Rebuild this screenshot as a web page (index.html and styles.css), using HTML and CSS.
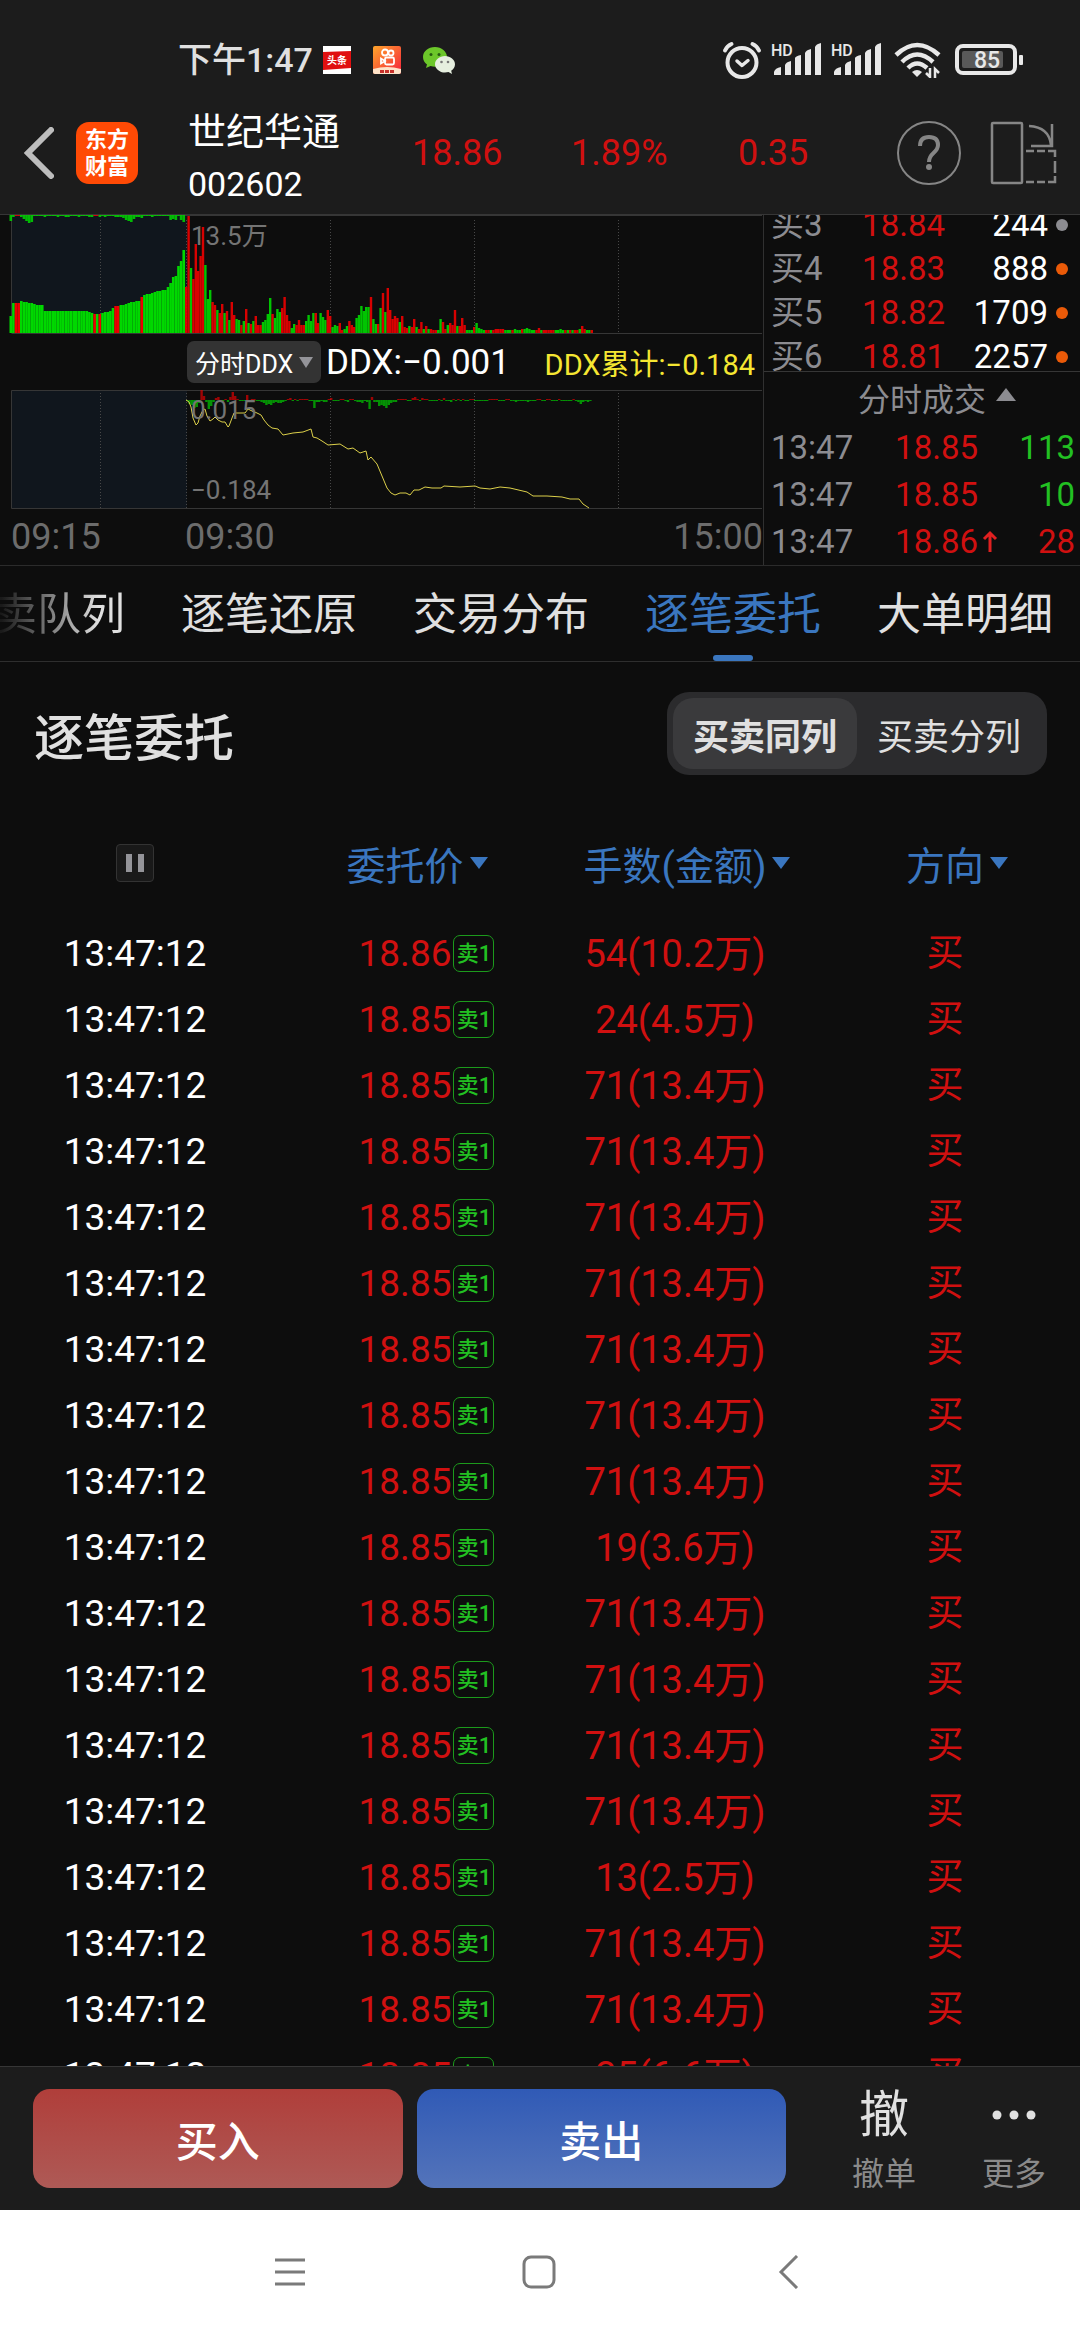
FILE: index.html
```html
<!DOCTYPE html>
<html lang="zh-CN">
<head>
<meta charset="utf-8">
<meta name="viewport" content="width=device-width">
<title>世纪华通 002602</title>
<link rel="stylesheet" href="styles.css">
</head>

<body>

<div class="status">
	<span class="clock">下午1:47</span>
	<svg class="app" width="28" height="28" viewBox="0 0 28 28">
		<rect width="28" height="28" fill="#fff"/>
		<path d="M0 6 L28 5 V22 L0 24 Z" fill="#e01010"/>
		<text x="14" y="18" text-anchor="middle" class="tiny">头条</text>
	</svg>
	<svg class="app" width="28" height="28" viewBox="0 0 28 28">
		<defs><linearGradient id="ks" x1="0" y1="0" x2="1" y2="1"><stop offset="0" stop-color="#ffa62b"/><stop offset="1" stop-color="#f5203c"/></linearGradient></defs>
		<rect width="28" height="28" rx="2" fill="url(#ks)"/>
		<path d="M0 23 Q14 19 28 23 V26 Q28 28 26 28 H2 Q0 28 0 26 Z" fill="#ffe3c8"/>
		<path d="M7 25.500h15" stroke="#c8322c" stroke-width="3" stroke-dasharray="4 1"/>
		<g fill="none" stroke="#fff" stroke-width="1.800"><circle cx="12" cy="6.500" r="3"/><circle cx="18" cy="7" r="2.500"/><rect x="12" y="11.500" width="9" height="7" rx="1.500"/><path d="M12 15l-4-2.500v5z"/></g>
	</svg>
	<svg class="app" width="32" height="28" viewBox="0 0 32 28">
		<path d="M12 1C5 1 0 5.500 0 11c0 3 1.500 5.500 4 7.500L3 22l4.500-2c1.500.500 3 .700 4.500.700 6.500 0 12-4.300 12-9.700S18.500 1 12 1z" fill="#6cc72a"/>
		<circle cx="8" cy="8.500" r="1.500" fill="#265c10"/><circle cx="16" cy="8.500" r="1.500" fill="#265c10"/>
		<path d="M22 10c-5.500 0-10 3.700-10 8.200s4.500 8.300 10 8.300c1.300 0 2.500-.200 3.500-.500L29 28l-.800-3.200c2.300-1.500 3.800-3.900 3.800-6.600C32 13.700 27.500 10 22 10z" fill="#e6efdf"/>
		<circle cx="18.500" cy="16" r="1.300" fill="#777"/><circle cx="25" cy="16" r="1.300" fill="#777"/>
	</svg>

	<div class="system">
		<svg width="40" height="38" viewBox="0 0 40 38" fill="none" stroke="#e8e8e8" stroke-linecap="round" stroke-linejoin="round">
			<circle cx="20" cy="21.500" r="14.500" stroke-width="4"/>
			<path d="M15 20l5 4.500 6-5" stroke-width="3.500"/>
			<path d="M3 9.500Q5 5 9.500 3M37 9.500Q35 5 30.500 3" stroke-width="4"/>
		</svg>
		<svg class="signal" width="50" height="34" viewBox="0 0 50 34"><use href="#bars"/></svg>
		<svg class="signal" width="50" height="34" viewBox="0 0 50 34">
			<g id="bars" fill="#e8e8e8">
				<text x="-1" y="13" class="hd">HD</text>
				<path d="M2 32v-3q1-4 7-5v8zM13 32V22q1-3 6-4v14zM23 32V15q1-2 6-3v20zM33 32V10q1-3 6-4v26zM43 32V4q1-3 6-4v32z"/>
			</g>
		</svg>
		<svg class="wifi" width="47" height="36" viewBox="0 0 47 36" fill="none" stroke="#e8e8e8" stroke-width="4.500">
			<path d="M2 13Q23 -7 45 13M8 20Q23 5 39 20M14 26Q23 17 33 26"/>
			<path d="M18 30q5-4 10 0l-5 5z" fill="#e8e8e8" stroke="none"/>
			<path d="M36 26v9l-4-4M41 36v-9l4 4" stroke-width="2.500"/>
		</svg>
		<svg width="69" height="32" viewBox="0 0 69 32">
			<rect x="2" y="2" width="58" height="27" rx="6" fill="none" stroke="#e8e8e8" stroke-width="4"/>
			<rect x="7" y="7" width="41" height="17" rx="2" fill="#595959"/>
			<rect x="64" y="11" width="4" height="10" rx="1" fill="#e8e8e8"/>
			<text x="32" y="24" text-anchor="middle" class="level">85</text>
		</svg>
	</div>
</div>

<header class="stock">
	<button class="back" aria-label="返回">
		<svg width="32" height="52" viewBox="0 0 32 52"><path d="M29 3L6 26l23 23" fill="none" stroke="#bdbdbd" stroke-width="6" stroke-linecap="round"/></svg>
	</button>
	<div class="logo">东方<br>财富</div>
	<div class="name"><h1>世纪华通</h1><span>002602</span></div>
	<span class="quote price">18.86</span>
	<span class="quote percent">1.89%</span>
	<span class="quote change">0.35</span>
	<button class="help" aria-label="帮助">
		<svg width="66" height="66" viewBox="0 0 66 66" fill="none" stroke="#868686">
			<circle cx="33" cy="33" r="31" stroke-width="2"/>
			<path d="M24 26q0-9 9-9t9 8q0 4-4.500 8T33 42" stroke-width="4"/>
			<circle cx="33" cy="47" r="3" fill="#868686" stroke="none"/>
		</svg>
	</button>
	<button class="rotate" aria-label="横屏">
		<svg width="68" height="66" viewBox="0 0 68 66" fill="none" stroke="#868686" stroke-width="2.500">
			<rect x="2" y="3" width="30" height="60" rx="1"/>
			<path d="M39 6q20 1 22 19M62 4v22H41"/>
			<path d="M36 31h8M47 31h8M58 31h7v6M65 41v12M65 56v6h-7M55 62h-8M44 62h-8"/>
		</svg>
	</button>
</header>

<section class="market">
	<div class="charts">
		<div class="chart">
			<svg id="volume" viewBox="0 0 763 119" preserveAspectRatio="none">
				<rect x="12" y="0" width="175" height="118" fill="#10161d"/>
				<g class="grid"><path d="M100.500 5V118M186.500 5V118M330.500 5V118M474.500 5V118M618.500 5V118"/></g>
				<path class="frame" d="M11.500 118V0.500H762M11.500 118.500H762"/>
			</svg>
			<span class="mark top">13.5万</span>
		</div>
		<div class="toolbar">
			<button class="indicator">分时DDX <i></i></button>
			<span class="ddx">DDX:−0.001</span>
			<span class="total">DDX累计:−0.184</span>
		</div>
		<div class="chart">
			<svg id="ddx" viewBox="0 0 763 119" preserveAspectRatio="none">
				<rect x="12" y="0" width="175" height="118" fill="#10161d"/>
				<g class="grid"><path d="M100.500 3V118M186.500 3V118M330.500 3V118M474.500 3V118M618.500 3V118"/></g>
				<path class="frame" d="M762 0.500H11.500V118.500H762"/>
				<polyline class="line" points="186,10 189,12 191,17 193,28 196,35 198,33 200,26 203,20 205,19 207,26 210,31 213,29 215,27 218,30 222,32 225,32 228,37 229,36 232,28 234,23 245,23 248,19 252,21 257,23 261,25 264,30 268,35 272,38 278,39 283,45 293,43 303,42 311,39 313,47 317,48 322,51 328,55 340,54 348,59 353,58 360,63 366,61 368,70 371,67 377,74 382,86 387,98 391,103 395,105 400,103 406,103 410,105 414,100 419,100 425,97 432,98 441,98 444,96 460,97 475,96 480,98 490,99 500,97 510,98 527,102 533,106 547,106 562,107 570,109 579,109 583,114 589,118"/>
			</svg>
			<span class="mark middle">0.015</span>
			<span class="mark bottom">−0.184</span>
		</div>
		<div class="axis"><span>09:15</span><span>09:30</span><span>15:00</span></div>
	</div>

	<aside class="side">
		<div class="depth">
			<table>
				<colgroup><col class="d1"><col class="d2"><col class="d3"><col class="d4"></colgroup>
				<tr><td>买3</td><td class="up">18.84</td><td class="qty">244</td><td><i class="dot gray"></i></td></tr>
				<tr><td>买4</td><td class="up">18.83</td><td class="qty">888</td><td><i class="dot"></i></td></tr>
				<tr><td>买5</td><td class="up">18.82</td><td class="qty">1709</td><td><i class="dot"></i></td></tr>
				<tr><td>买6</td><td class="up">18.81</td><td class="qty">2257</td><td><i class="dot"></i></td></tr>
			</table>
		</div>
		<button class="expand">分时成交<i></i></button>
		<table class="trades">
			<colgroup><col class="t1"><col class="t2"><col class="t3"><col class="t4"></colgroup>
			<tr><td>13:47</td><td class="up">18.85</td><td></td><td class="down">113</td></tr>
			<tr><td>13:47</td><td class="up">18.85</td><td></td><td class="down">10</td></tr>
			<tr><td>13:47</td><td class="up">18.86</td><td><svg width="16" height="24" viewBox="0 0 16 24"><path d="M8 22V3M2 9l6-6 6 6" fill="none" stroke="#e02020" stroke-width="3"/></svg></td><td class="up">28</td></tr>
		</table>
	</aside>
</section>

<nav class="tabs">
	<a href="#queue">买卖队列</a>
	<a href="#restore">逐笔还原</a>
	<a href="#spread">交易分布</a>
	<a href="#orders" class="active">逐笔委托</a>
	<a href="#large">大单明细</a>
</nav>

<main id="orders">
	<div class="heading">
		<h2>逐笔委托</h2>
		<div class="switch">
			<button class="on">买卖同列</button>
			<button>买卖分列</button>
		</div>
	</div>
	<table class="list">
		<thead>
			<tr>
				<th><button class="pause" aria-label="暂停"><i></i><i></i></button></th>
				<th><button class="sort">委托价</button></th>
				<th><button class="sort">手数(金额)</button></th>
				<th><button class="sort">方向</button></th>
			</tr>
		</thead>
		<tbody id="rows"></tbody>
	</table>
</main>

<footer class="actions">
	<button class="buy">买入</button>
	<button class="sell">卖出</button>
	<button class="tool"><b>撤</b><span>撤单</span></button>
	<button class="tool"><b><svg width="44" height="10" viewBox="0 0 44 10" fill="#e0e0e0"><circle cx="5" cy="5" r="4.500"/><circle cx="22" cy="5" r="4.500"/><circle cx="39" cy="5" r="4.500"/></svg></b><span>更多</span></button>
</footer>

<div class="system-nav">
	<button aria-label="菜单"><svg width="34" height="34" viewBox="0 0 34 34"><path d="M2 5h30M2 17h30M2 29h30"/></svg></button>
	<button aria-label="主页"><svg width="34" height="34" viewBox="0 0 34 34"><rect x="2" y="2" width="30" height="30" rx="7"/></svg></button>
	<button aria-label="返回"><svg width="34" height="34" viewBox="0 0 34 34"><path d="M26 1L10 17l16 16"/></svg></button>
</div>

<script src="script.js"></script>
</body>
</html>
```
FILE: styles.css
```css
* {
	box-sizing: border-box;
}

body {
	margin: 0;
	height: 100vh;
	display: flex;
	flex-direction: column;
	overflow: hidden;
	background: #0d0d0d;
	color: #e0e0e0;
	font-family: Roboto, "Noto Sans CJK SC", sans-serif;
}

button {
	margin: 0;
	padding: 0;
	border: 0;
	background: none;
	color: inherit;
	font: inherit;
}

svg {
	display: block;
	flex: none;
}

table {
	width: 100%;
	border-collapse: collapse;
	table-layout: fixed;
}

td, th {
	padding: 0;
}

/* Phone status bar */
.status {
	flex: none;
	display: flex;
	align-items: center;
	height: 92px;
	padding: 28px 56px 0 178px;
	background: #1c1c1c;
}

.clock {
	font-size: 34px;
	font-weight: 500;
	line-height: 40px;
	margin-right: 10px;
}

.app {
	margin-right: 22px;
}

.tiny {
	font-size: 10px;
	font-weight: bold;
	fill: white;
}

.system {
	display: flex;
	align-items: center;
	gap: 10px;
	margin-left: auto;
}

.signal {
	overflow: visible;
}

.hd {
	font-size: 16px;
	font-weight: 500;
}

.wifi {
	margin: 0 4px 0 2px;
}

.level {
	font-size: 23px;
	font-weight: 500;
	fill: #e8e8e8;
}

/* Stock header */
.stock {
	flex: none;
	display: flex;
	align-items: center;
	height: 123px;
	padding: 0 22px;
	background: #1c1c1c;
	border-bottom: 1px solid #363636;
}

.logo {
	width: 62px;
	height: 62px;
	margin-left: 22px;
	padding-top: 4px;
	border-radius: 13px;
	background: #ff4a05;
	color: white;
	font-size: 22px;
	font-weight: bold;
	line-height: 27px;
	text-align: center;
}

.name {
	width: 224px;
	margin-left: 50px;
	padding-top: 10px;
	color: white;
	font-size: 34px;
	line-height: 52px;
}

.name h1 {
	margin: 0;
	font-size: 38px;
	font-weight: normal;
	line-height: 52px;
}

.name span {
	display: block;
}

.quote {
	color: #d01010;
	font-size: 36px;
}

.price {
	width: 159px;
}

.percent {
	width: 167px;
}

.help {
	margin-left: auto;
}

.rotate {
	margin-left: 28px;
}

/* Charts */
.market {
	flex: none;
	display: flex;
	border-bottom: 1px solid #2b2b2b;
}

.charts {
	flex: 1;
}

.chart {
	position: relative;
}

.chart svg {
	width: 100%;
	height: 119px;
}

.grid {
	stroke: #484848;
	stroke-dasharray: 1 2;
}

.frame {
	fill: none;
	stroke: #363636;
}

.line {
	fill: none;
	stroke: #dcd04a;
}

.mark {
	position: absolute;
	left: 191px;
	color: #747474;
	font-size: 26px;
	line-height: 30px;
}

.top {
	top: 6px;
}

.middle {
	top: 5px;
}

.bottom {
	bottom: 4px;
}

.toolbar {
	display: flex;
	align-items: center;
	height: 56px;
	padding: 0 8px 0 187px;
	white-space: nowrap;
}

.indicator {
	display: flex;
	align-items: center;
	justify-content: space-between;
	width: 134px;
	height: 42px;
	padding: 0 8px;
	border-radius: 7px;
	background: #333;
	color: white;
	font-size: 25px;
}

.indicator i {
	border: 7px solid transparent;
	border-top: 11px solid #949499;
	border-bottom: 0;
}

.ddx {
	margin-left: 5px;
	color: white;
	font-size: 35px;
}

.total {
	margin-left: auto;
	color: #f5e632;
	font-size: 29px;
}

.axis {
	display: flex;
	height: 55px;
	padding-left: 11px;
	color: #6c6c6c;
	font-size: 36px;
	line-height: 56px;
}

.axis span {
	width: 174px;
}

.axis span:last-child {
	width: auto;
	margin-left: auto;
}

/* Order book and latest trades */
.side {
	width: 317px;
	border-left: 1px solid #303030;
	color: #8c8c91;
	font-size: 33px;
}

.depth {
	height: 157px;
	overflow: hidden;
	border-bottom: 1px solid #363636;
}

.depth table {
	margin-top: -12px;
}

.depth tr {
	height: 44px;
	line-height: 44px;
}

.depth td:first-child, .trades td:first-child {
	padding-left: 7px;
	text-align: left;
}

.depth td, .trades td {
	text-align: right;
}

.d1 {
	width: 80px;
}

.d2 {
	width: 101px;
}

.d3 {
	width: 103px;
}

.qty {
	color: white;
}

.up {
	color: #d01010;
}

.down {
	color: #22c022;
}

.dot {
	display: block;
	width: 12px;
	height: 12px;
	margin-left: 8px;
	border-radius: 50%;
	background: #ea5a08;
}

.gray {
	background: #8c8c91;
}

.expand {
	display: flex;
	align-items: center;
	justify-content: center;
	gap: 10px;
	width: 100%;
	height: 52px;
	padding-bottom: 2px;
	padding-left: 54px;
	padding-right: 24px;
	font-size: 32px;
}

.expand i {
	border: 10px solid transparent;
	border-bottom: 13px solid #8c8c91;
	border-top: 0;
	margin-bottom: 6px;
}

.trades tr {
	height: 47px;
	line-height: 47px;
}

.t1 {
	width: 100px;
}

.t2 {
	width: 114px;
}

.t3 {
	width: 22px;
}

.trades svg {
	margin-left: 4px;
}

.trades td:last-child {
	padding-right: 5px;
}

/* Section tabs, scrolled to the right */
.tabs {
	flex: none;
	display: flex;
	justify-content: flex-end;
	gap: 56px;
	height: 96px;
	padding-right: 27px;
	overflow: hidden;
	border-bottom: 1px solid #2e2e2e;
	font-size: 44px;
	line-height: 98px;
	white-space: nowrap;
}

.tabs a {
	position: relative;
	color: #e0e0e0;
	text-decoration: none;
}

.tabs a:first-child {
	background: linear-gradient(to right, #1a1a1a 30%, #e0e0e0 85%);
	background-clip: text;
	-webkit-background-clip: text;
	color: transparent;
}

.tabs .active {
	color: #3a76bf;
}

.active::after {
	content: "";
	position: absolute;
	left: 50%;
	bottom: 0;
	width: 40px;
	height: 6px;
	margin-left: -20px;
	border-radius: 3px;
	background: #3a76bf;
}

/* Order list */
main {
	flex: 1;
	min-height: 0;
	overflow: hidden;
}

.heading {
	display: flex;
	align-items: center;
	justify-content: space-between;
	height: 143px;
	padding: 0 33px 0 34px;
}

.heading h2 {
	margin: 0;
	font-size: 50px;
	font-weight: 500;
}

.switch {
	display: flex;
	padding: 6px;
	border-radius: 22px;
	background: #2b2b2d;
	font-size: 36px;
}

.switch button {
	width: 184px;
	height: 71px;
	border-radius: 20px;
}

.switch .on {
	background: #3a3a3c;
	font-weight: bold;
}

.list {
	font-size: 37px;
	text-align: center;
	color: #d01010;
}

.list thead tr {
	height: 116px;
}

.list th {
	font-weight: normal;
	color: #3a76bf;
}

.list tbody tr {
	height: 66px;
	line-height: 66px;
}

.list td:first-child {
	color: white;
}

.list td:nth-child(3) {
	font-size: 38px;
}

.pause {
	display: flex;
	align-items: center;
	justify-content: center;
	gap: 6px;
	width: 38px;
	height: 38px;
	margin: 0 auto;
	border: 1px solid #333;
	border-radius: 4px;
	background: #191919;
}

.pause i {
	width: 6px;
	height: 18px;
	background: #949499;
}

.sort, .at {
	position: relative;
}

.sort {
	font-size: 39px;
}

.sort::after {
	content: "";
	position: absolute;
	left: 100%;
	top: 50%;
	margin: -6px 0 0 6px;
	border: 9px solid transparent;
	border-top: 12px solid #3a76bf;
	border-bottom: 0;
}

.level-tag {
	position: absolute;
	left: 100%;
	top: 50%;
	width: 41px;
	height: 37px;
	margin: -19px 0 0 2px;
	border: 1px solid #1c9a1c;
	border-radius: 7px;
	color: #22c022;
	font-size: 22px;
	font-weight: 500;
	line-height: 35px;
}

/* Trade buttons */
.actions {
	flex: none;
	display: flex;
	align-items: center;
	height: 144px;
	padding: 0 1px 0 33px;
	background: #1c1c1c;
	border-top: 1px solid #363636;
}

.buy, .sell {
	flex: 1;
	height: 99px;
	margin-right: 14px;
	border-radius: 17px;
	color: white;
	font-size: 42px;
	font-weight: 500;
}

.buy {
	background: linear-gradient(#b03e3a, #ae5a56);
}

.sell {
	margin-right: 33px;
	background: linear-gradient(#305ab6, #5474ba);
}

.tool {
	width: 130px;
	padding-top: 4px;
	color: #8a8a8a;
	font-size: 32px;
	line-height: 46px;
}

.tool b {
	display: flex;
	align-items: center;
	justify-content: center;
	height: 60px;
	margin-bottom: 6px;
	color: #e0e0e0;
	font-size: 50px;
	font-weight: normal;
}

.tool span {
	display: block;
}

.system-nav {
	flex: none;
	display: flex;
	align-items: center;
	justify-content: center;
	gap: 215px;
	height: 130px;
	padding: 0 3px 6px 0;
	background: white;
}

.system-nav svg {
	fill: none;
	stroke: #7a7a7a;
	stroke-width: 3;
}
```
FILE: script.js
```js
var GREEN = "#00d800";
var RED = "#ee0000";

/* Bar heights, each with its color: g for green, r for red. */
var auction = "17g 30g 30r 30r 32g 31g 31g 30g 30g 29g 28g 28g 28g 22g 22g 22g 22g 22g 22g 22g 22g 22g 22g 22g 22g 22g 22g 22g 22g 22g 21g 20g 19r 19g 19r 20g 21g 21g 22g 25g 27r 27r 28g 28g 29g 30g 31g 31g 32g 32g 36r 38g 39g 39g 40g 41g 42g 42g 43g 43g 46g 50g 56g 57g 67g 72g 83g";

var unmatched = "6g 2g 1r 1r 2g 4g 6g 8g 7g 1g 1g 1g 1g 2g 1g 1g 1g 1g 2g 1g 1g 2g 2g 1g 1g 1g 2g 1g 1g 1g 2g 2g 1r 1r 2g 1g 2g 1g 1g 1g 2g 2g 2g 3g 5g 6g 7g 4g 2g 2g 3g 1g 1g 1g 2g 1g 1g 1g 1g 1g 1g 5g 4g 5g 1g 5g 7g";

var volume = "46r 117r 65g 54r 89r 62r 77r 106r 68g 34g 43g 31r 28r 23g 20r 29r 20g 22r 13g 31r 18r 14g 13g 8r 12g 24r 10g 9r 12g 17r 8r 8r 11g 13g 19g 35g 19r 15g 24g 21g 25r 36r 18r 12r 5g 9g 8r 13r 8r 8r 12g 18g 12g 20g 20r 10r 20g 16g 13g 23r 17r 6g 8g 7g 10r 3r 4g 7g 12r 8r 6r 15g 18g 27g 22g 26g 26g 36r 14g 9g 9r 25g 40r 21g 45r 23r 14r 17r 15r 11g 17r 6r 5r 7g 6r 14r 6g 4r 11r 4g 7r 4g 4r 3r 3r 3g 14g 11r 4r 8g 10r 8r 23r 7g 7r 15r 8r 3g 3g 3g 6r 10g 5g 4g 3g 3r 3r 3g 3r 4r 4r 4r 4r 3g 3g 3g 3r 4g 3g 3g 4r 4g 5g 4g 3g 3g 3r 5r 3g 3r 3r 3r 3r 3r 3g 3g 4g 3g 3r 3g 3r 3g 3r 3r 4g 7r 4r 3g 3g 3r";

var flow = "1g 4g 5g 8g 7g 3g 10r 4r 2g 9g 6g 2g 2r 3r 1g 1g 1r 2g 3r 8r 4r 1r 1g 1g 1g 5r 2g 1r 1r 1g 1g 2g 3g 5g 4g 5g 3g 2g 3g 3g 2g 1g 1r 2r 1g 1r 1g 1r 1r 1r 1r 1g 1g 8g 2g 2g 1g 2g 2g 1r 2r 1g 1g 1g 1r 1r 1g 2g 1r 1r 1g 2g 2g 3g 1g 2g 9g 3r 2g 2g 6g 5g 6g 8g 5g 3g 2g 2g 1r 1r 1r 1r 1g 1g 2r 3r 1r 1g 2r 1r 1r 1g 1g 1g 1g 1r 1g 2r 1g 1g 2g 1r 1g 1r 1g 1r 1g 1g 1r 1r 1g 1g 1g 1g 1g 1g 1r 1r 1r 1r 1g 1g 1g 1r 1r 1g 1g 2g 1g 1g 1g 1g 2g 1g 1g 1g 1r 1r 1g 1g 1r 1r 1g 1g 1g 1r 1g 1g 1g 1g 1g 1r 1g 2g 4g 2g 1g 2g 1g";

/* Draws bars from the base line; place(height, color) gives the top. */
function drawBars(svg, data, start, step, opacity, place) {
	var before = svg.querySelector("polyline");
	data.split(" ").forEach(function (item, i) {
		var height = parseInt(item);
		var color = item.slice(-1);
		var bar = document.createElementNS("http://www.w3.org/2000/svg", "rect");
		bar.setAttribute("x", (start + i * step).toFixed(2));
		bar.setAttribute("y", place(height, color));
		bar.setAttribute("width", step);
		bar.setAttribute("height", height);
		bar.setAttribute("fill", color == "g" ? GREEN : RED);
		bar.setAttribute("fill-opacity", opacity);
		svg.insertBefore(bar, before);
	});
}

var volumeChart = document.getElementById("volume");
var ddxChart = document.getElementById("ddx");
drawBars(volumeChart, auction, 9.5, 2.62, 1, function (h) { return 118 - h; });
drawBars(volumeChart, unmatched, 9.5, 2.62, 0.85, function () { return 0; });
drawBars(volumeChart, volume, 185, 2.4, 0.9, function (h) { return 118 - h; });
drawBars(ddxChart, flow, 186, 2.4, 0.65, function (h, c) { return c == "r" ? 10 - h : 10; });

/* Orders: price and lots(amount). */
var orders = [
	["18.86", "54(10.2万)"],
	["18.85", "24(4.5万)"],
	["18.85", "71(13.4万)"],
	["18.85", "71(13.4万)"],
	["18.85", "71(13.4万)"],
	["18.85", "71(13.4万)"],
	["18.85", "71(13.4万)"],
	["18.85", "71(13.4万)"],
	["18.85", "71(13.4万)"],
	["18.85", "19(3.6万)"],
	["18.85", "71(13.4万)"],
	["18.85", "71(13.4万)"],
	["18.85", "71(13.4万)"],
	["18.85", "71(13.4万)"],
	["18.85", "13(2.5万)"],
	["18.85", "71(13.4万)"],
	["18.85", "71(13.4万)"],
	["18.85", "35(6.6万)"]
];

document.getElementById("rows").innerHTML = orders.map(function (o) {
	return "<tr><td>13:47:12</td>" +
		"<td><span class=\"at\">" + o[0] + "<span class=\"level-tag\">卖1</span></span></td>" +
		"<td>" + o[1] + "</td><td>买</td></tr>";
}).join("");
```
